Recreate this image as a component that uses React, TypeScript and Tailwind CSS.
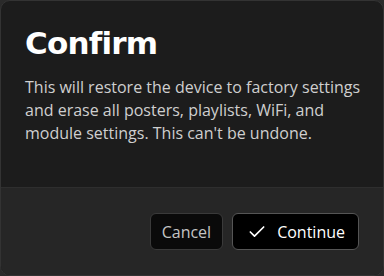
import { Check } from "lucide-react";

export default function App() {
  return (
    <div className="h-[276px] w-[384px] bg-[#2a2a2a]">
      <div
        className="flex h-full w-full flex-col overflow-hidden rounded-[10px] border border-[#333333] bg-[#1c1c1c]"
        style={{ fontFamily: '"Open Sans", sans-serif' }}
      >
        <div className="flex-1 pl-6 pr-3 pt-[21px]">
          <h1
            className="text-[31px] font-extrabold leading-[42px] tracking-[-0.025em] text-white"
            style={{ fontFamily: '"DejaVu Sans", sans-serif' }}
          >
            Confirm
          </h1>
          <p className="mt-[12px] text-[16px] leading-[23px] text-[#cfcfcf]">
            This will restore the device to factory settings and erase all
            posters, playlists, WiFi, and module settings. This can't be
            undone.
          </p>
        </div>
        <div className="flex h-[88px] items-center justify-end gap-[9px] border-t border-[#2e2e2e] bg-[#262626] px-6">
          <button className="h-[37px] rounded-[6px] border border-[#3a3a3a] bg-[#0a0a0a] px-[11px] text-[16px] text-[#c4c4c4]">
            Cancel
          </button>
          <button className="flex h-[37px] items-center gap-[10px] rounded-[6px] border border-[#555555] bg-black pl-[14px] pr-[13px] text-[16px] text-white">
            <Check size={20} strokeWidth={2} />
            Continue
          </button>
        </div>
      </div>
    </div>
  );
}
